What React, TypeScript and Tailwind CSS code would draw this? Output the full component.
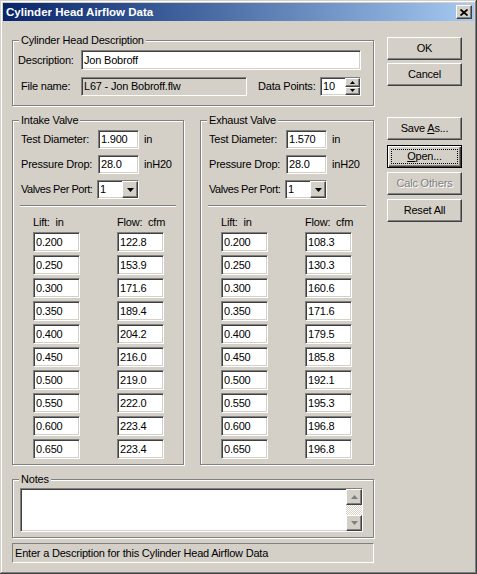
import React from 'react';

const sunken =
  'border border-t-[#808080] border-l-[#808080] border-b-white border-r-white shadow-[inset_1px_1px_0_#404040,inset_-1px_-1px_0_#d4d0c8]';
const raised =
  'border border-t-white border-l-white border-b-[#404040] border-r-[#404040] shadow-[inset_-1px_-1px_0_#808080] bg-[#d4d0c8]';

const lifts = ['0.200', '0.250', '0.300', '0.350', '0.400', '0.450', '0.500', '0.550', '0.600', '0.650'];
const intakeFlow = ['122.8', '153.9', '171.6', '189.4', '204.2', '216.0', '219.0', '222.0', '223.4', '223.4'];
const exhaustFlow = ['108.3', '130.3', '160.6', '171.6', '179.5', '185.8', '192.1', '195.3', '196.8', '196.8'];

function Tri({ dir, color = '#000' }: { dir: 'up' | 'down'; color?: string }) {
  return (
    <svg width="7" height="4" viewBox="0 0 7 4" className="block">
      {dir === 'down' ? (
        <polygon points="0,0 7,0 3.5,4" fill={color} />
      ) : (
        <polygon points="0,4 7,4 3.5,0" fill={color} />
      )}
    </svg>
  );
}

function SmallTri({ dir }: { dir: 'up' | 'down' }) {
  return (
    <svg width="5" height="3" viewBox="0 0 5 3" className="block">
      {dir === 'down' ? <polygon points="0,0 5,0 2.5,3" fill="#000" /> : <polygon points="0,3 5,3 2.5,0" fill="#000" />}
    </svg>
  );
}

function Field({ value, className = '', gray = false }: { value: string; className?: string; gray?: boolean }) {
  return (
    <div className={`${sunken} ${gray ? 'bg-[#d4d0c8]' : 'bg-white'} flex items-center pl-[2px] ${className}`}>
      {value}
    </div>
  );
}

function Group({ title, className = '', children }: { title: string; className?: string; children: React.ReactNode }) {
  return (
    <fieldset className={`border border-[#808080] shadow-[1px_1px_0_#fff,inset_1px_1px_0_#fff] ${className}`}>
      <legend className="ml-[6px] px-[2px] bg-[#d4d0c8] leading-[13px]">{title}</legend>
      {children}
    </fieldset>
  );
}

function Combo({ value }: { value: string }) {
  return (
    <div className={`${sunken} bg-white flex items-stretch w-[42px] h-[19px] pl-[2px]`}>
      <span className="flex-1 flex items-center">{value}</span>
      <div className={`${raised} w-[16px] flex items-center justify-center`}>
        <Tri dir="down" />
      </div>
    </div>
  );
}

function Btn({ label, disabled = false }: { label: React.ReactNode; disabled?: boolean }) {
  return (
    <div
      className={`${raised} w-[75px] h-[23px] flex items-center justify-center ${
        disabled ? 'text-[#808080] [text-shadow:1px_1px_0_#fff]' : ''
      }`}
    >
      {label}
    </div>
  );
}

function Valve({ title, diameter, flows, className }: { title: string; diameter: string; flows: string[]; className: string }) {
  return (
    <Group title={title} className={`${className} pb-[5px]`}>
      <div className="flex flex-col gap-[6px] mt-[3px] pl-[8px]">
        <div className="flex items-center h-[19px]">
          <span className="w-[77px]">Test Diameter:</span>
          <Field value={diameter} className="w-[41px] h-[19px]" />
          <span className="ml-[5px]">in</span>
        </div>
        <div className="flex items-center h-[19px]">
          <span className="w-[77px]">Pressure Drop:</span>
          <Field value="28.0" className="w-[41px] h-[19px]" />
          <span className="ml-[5px]">inH20</span>
        </div>
        <div className="flex items-center h-[19px]">
          <span className="w-[76px] whitespace-nowrap tracking-[-0.45px]">Valves Per Port:</span>
          <Combo value="1" />
        </div>
      </div>
      <div className="mx-[7px] mt-[6px] h-[2px] border-t border-t-[#808080] border-b border-b-white" />
      <div className="flex mt-[9px] pl-[20px] leading-[13px]">
        <span className="w-[84px]">Lift:&nbsp; in</span>
        <span>Flow:&nbsp; cfm</span>
      </div>
      <div className="flex flex-col gap-[3px] mt-[3px] pl-[20px]">
        {lifts.map((l, i) => (
          <div key={l} className="flex">
            <Field value={l} className="w-[47px] h-[20px]" />
            <Field value={flows[i]} className="w-[47px] h-[20px] ml-[37px]" />
          </div>
        ))}
      </div>
    </Group>
  );
}

export default function App() {
  return (
    <div className="w-[477px] h-[574px] bg-[#d4d0c8] p-[3px] shadow-[inset_-1px_-1px_0_#404040,inset_1px_1px_0_#d4d0c8,inset_-2px_-2px_0_#808080,inset_2px_2px_0_#fff] font-['Liberation_Sans',Arial,sans-serif] text-[11px] leading-[13px] tracking-[-0.2px] text-black overflow-hidden">
      <div className="h-[18px] bg-linear-to-r from-[#0a246a] to-[#a6caf0] flex items-center justify-between pl-[3px] pr-[2px]">
        <span className="text-white font-bold text-[11.5px] tracking-normal">Cylinder Head Airflow Data</span>
        <div className={`${raised} w-[16px] h-[14px] flex items-center justify-center`}>
          <svg width="8" height="7" viewBox="0 0 8 7" className="block">
            <path d="M0.5 0.5 L7.5 6.5 M7.5 0.5 L0.5 6.5" stroke="#000" strokeWidth="1.7" />
          </svg>
        </div>
      </div>

      <div className="flex pl-[9px]">
        <div className="w-[362px] mt-[13px] flex flex-col">
          <Group title="Cylinder Head Description" className="pb-[9px]">
            <div className="flex items-center mt-[3px]">
              <span className="ml-[5px] w-[63px]">Description:</span>
              <Field value="Jon Bobroff" className="w-[280px] h-[20px]" />
            </div>
            <div className="flex items-center mt-[7px]">
              <span className="ml-[8px] w-[60px]">File name:</span>
              <Field value="L67 - Jon Bobroff.flw" gray className="w-[166px] h-[19px]" />
              <span className="ml-[11px] w-[62px]">Data Points:</span>
              <div className={`${sunken} bg-white flex items-stretch w-[41px] h-[19px] pl-[2px]`}>
                <span className="flex-1 flex items-center">10</span>
                <div className="w-[15px] flex flex-col">
                  <div className={`${raised} flex-1 flex items-center justify-center`}>
                    <SmallTri dir="up" />
                  </div>
                  <div className={`${raised} flex-1 flex items-center justify-center`}>
                    <SmallTri dir="down" />
                  </div>
                </div>
              </div>
            </div>
          </Group>

          <div className="flex mt-[8px] gap-[16px]">
            <Valve title="Intake Valve" diameter="1.900" flows={intakeFlow} className="w-[172px]" />
            <Valve title="Exhaust Valve" diameter="1.570" flows={exhaustFlow} className="w-[174px]" />
          </div>

          <Group title="Notes" className="mt-[8px] pb-[5px]">
            <div className={`${sunken} bg-white ml-[7px] mt-[2px] w-[343px] h-[44px] flex justify-end`}>
              <div className="w-[16px] flex flex-col">
                <div className={`${raised} h-[16px] flex items-center justify-center`}>
                  <Tri dir="up" color="#808080" />
                </div>
                <div className="flex-1 bg-[repeating-conic-gradient(#fff_0_25%,#d4d0c8_0_50%)] bg-size-[2px_2px]" />
                <div className={`${raised} h-[16px] flex items-center justify-center`}>
                  <Tri dir="down" color="#808080" />
                </div>
              </div>
            </div>
          </Group>

          <div className="mt-[5px] h-[20px] border border-t-[#808080] border-l-[#808080] border-b-white border-r-white flex items-center pl-[2px]">
            Enter a Description for this Cylinder Head Airflow Data
          </div>
        </div>

        <div className="ml-[13px] mt-[16px] flex flex-col">
          <Btn label="OK" />
          <div className="mt-[3px]">
            <Btn label="Cancel" />
          </div>
          <div className="mt-[31px]">
            <Btn
              label={
                <span>
                  Save <u>A</u>s...
                </span>
              }
            />
          </div>
          <div className="mt-[5px] w-[75px] h-[23px] border border-black bg-[#d4d0c8] shadow-[inset_1px_1px_0_#fff,inset_-1px_-1px_0_#404040,inset_-2px_-2px_0_#808080] flex p-[3px]">
            <div className="flex-1 border border-dotted border-black flex items-center justify-center">
              <span>
                <u>O</u>pen...
              </span>
            </div>
          </div>
          <div className="mt-[4px]">
            <Btn label="Calc Others" disabled />
          </div>
          <div className="mt-[4px]">
            <Btn label="Reset All" />
          </div>
        </div>
      </div>
    </div>
  );
}
